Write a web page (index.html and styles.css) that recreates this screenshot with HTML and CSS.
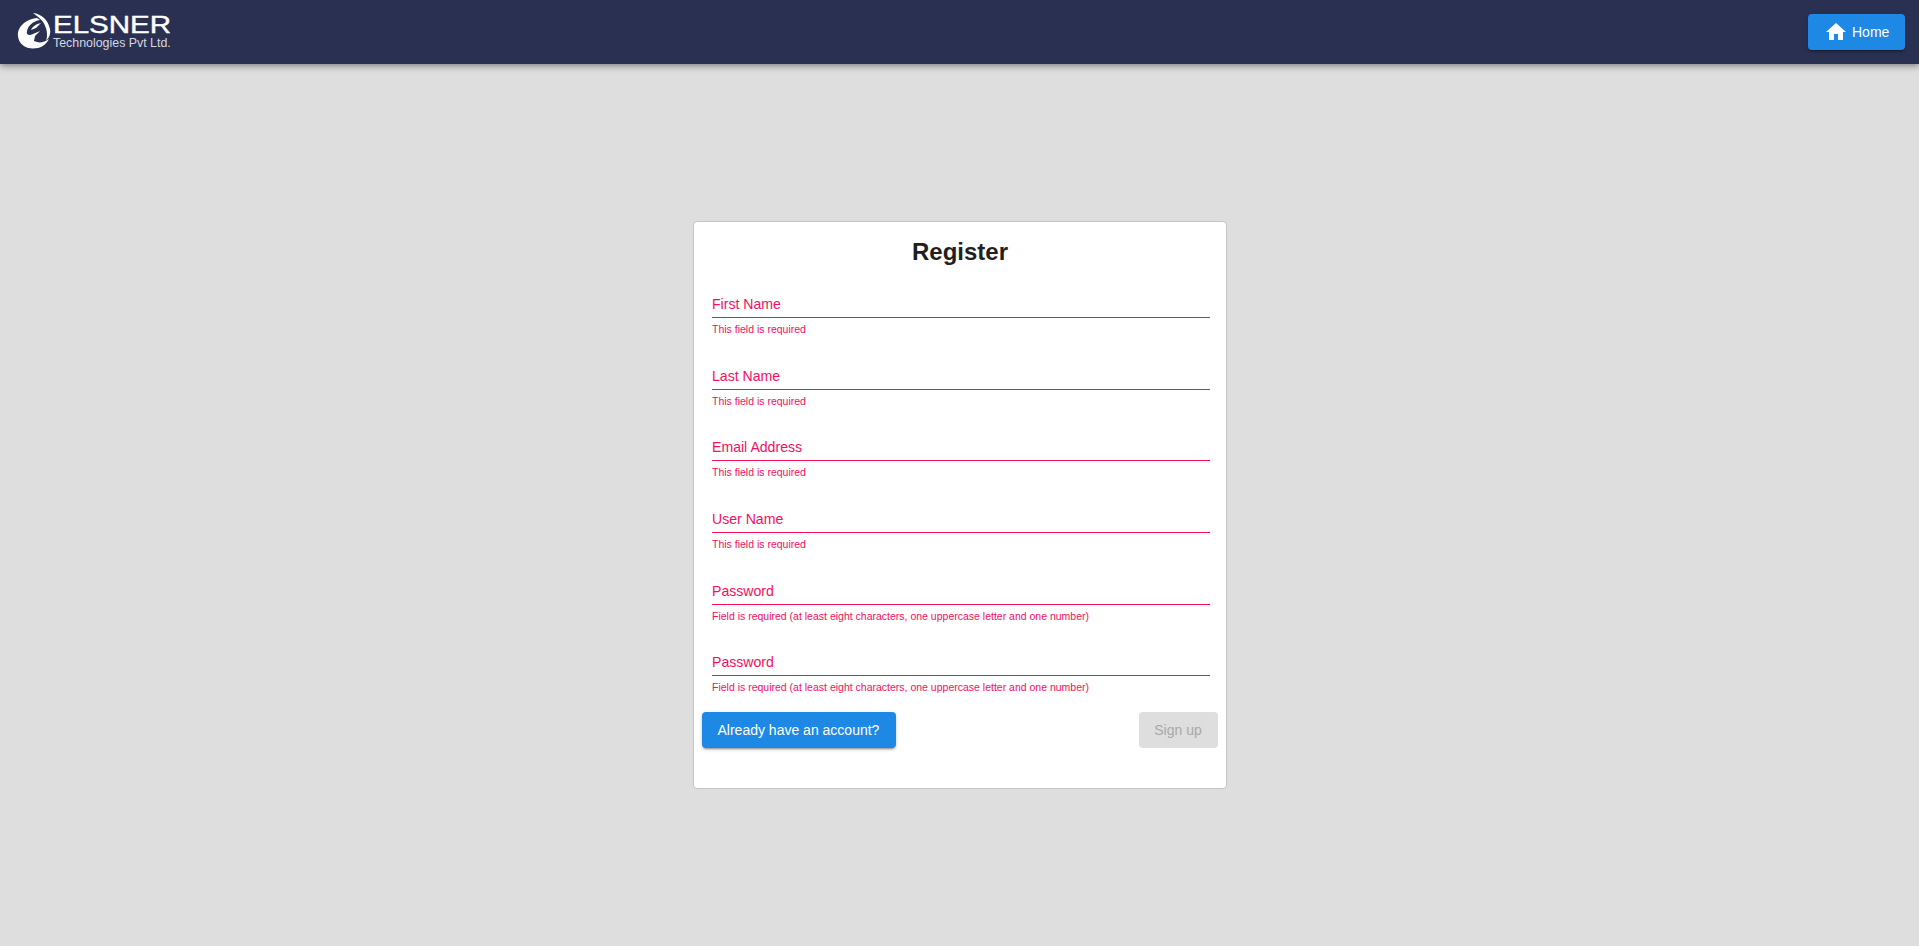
FILE: index.html
```html
<!DOCTYPE html>
<html lang="en">
<head>
    <meta charset="UTF-8">
    <meta name="viewport" content="width=device-width, initial-scale=1.0">
    <title>Register</title>
    <link rel="stylesheet" href="styles.css">
</head>
<body>
    <header class="topbar">
        <div class="logo">
            <svg class="logo-mark" viewBox="0 0 40 44" width="40" height="44">
                <path fill="#fff" d="M23 8C12 9 3 17 4 26c1 10 10 14 20 12 5-1 9-5 11-9-4 3-9 4-12 3l-3-1 1-5 5-5-7 3c-4 2-7 1-6-3 1-5 6-10 13-11z"/>
                <path fill="#fff" d="M19 3c9 1 15 7 17 16 1 5-1 9-4 12 2-6 1-13-3-19-2-3-6-6-10-9z"/>
                <path fill="#fff" d="M27 13c-5 1-9 4-10 7l5-2z"/>
            </svg>
            <div class="logo-text">
                <span class="logo-name">ELSNER</span>
                <span class="logo-sub">Technologies Pvt Ltd.</span>
            </div>
        </div>
        <button class="btn btn-primary btn-home">
            <svg class="home-icon" viewBox="0 0 24 24" width="24" height="24">
                <path fill="#fff" d="M10 20v-6h4v6h5v-8h3L12 3 2 12h3v8z"/>
            </svg>
            Home
        </button>
    </header>
    <main class="page">
        <form class="card">
            <h1 class="card-title">Register</h1>
            <div class="field">
                <label class="field-label">First Name</label>
                <p class="field-error">This field is required</p>
            </div>
            <div class="field">
                <label class="field-label">Last Name</label>
                <p class="field-error">This field is required</p>
            </div>
            <div class="field">
                <label class="field-label">Email Address</label>
                <p class="field-error">This field is required</p>
            </div>
            <div class="field">
                <label class="field-label">User Name</label>
                <p class="field-error">This field is required</p>
            </div>
            <div class="field">
                <label class="field-label">Password</label>
                <p class="field-error">Field is required (at least eight characters, one uppercase letter and one number)</p>
            </div>
            <div class="field">
                <label class="field-label">Password</label>
                <p class="field-error">Field is required (at least eight characters, one uppercase letter and one number)</p>
            </div>
            <div class="actions">
                <button type="button" class="btn btn-primary">Already have an account?</button>
                <button type="button" class="btn btn-disabled" disabled>Sign up</button>
            </div>
        </form>
    </main>
</body>
</html>
```

FILE: styles.css
```css
* {
    box-sizing: border-box;
}
html, body {
    height: 100%;
}
body {
    margin: 0;
    font-family: "Liberation Sans", Arial, sans-serif;
    background-color: #dedede;
    overflow: hidden;
}
.topbar {
    height: 64px;
    background: #2a3052;
    display: flex;
    justify-content: space-between;
    align-items: center;
    padding: 0 14px 0 14px;
    box-shadow: 0 2px 4px -1px rgba(0,0,0,.2), 0 4px 5px rgba(0,0,0,.14), 0 1px 10px rgba(0,0,0,.12);
}
.logo {
    display: flex;
    align-items: flex-start;
    color: #fff;
}
.logo-text {
    display: flex;
    flex-direction: column;
    margin-left: -1px;
    padding-top: 3px;
}
.logo-name {
    font-size: 24px;
    line-height: 23px;
    -webkit-text-stroke: .4px #fff;
    transform: scaleX(1.23);
    transform-origin: left center;
}
.logo-sub {
    font-size: 12.4px;
    line-height: 14px;
    color: #d5d7e0;
}
.btn {
    border: none;
    border-radius: 4px;
    font-family: inherit;
    font-size: 14px;
    height: 36px;
    padding: 0 16px;
    display: flex;
    align-items: center;
    white-space: nowrap;
}
.btn-primary {
    background: #1e88e5;
    color: #fff;
    box-shadow: 0 3px 1px -2px rgba(0,0,0,.2), 0 2px 2px rgba(0,0,0,.14), 0 1px 5px rgba(0,0,0,.12);
}
.btn-disabled {
    background: #dedede;
    color: #a8a8a8;
}
.btn-home {
    width: 97px;
    gap: 4px;
    padding: 0 0 0 16px;
}
.page {
    height: calc(100% - 64px);
    padding-top: 157px;
    display: flex;
    justify-content: center;
    align-items: flex-start;
}
.card {
    width: 534px;
    height: 568px;
    background: #fff;
    border: 1px solid #c4c4c4;
    border-radius: 4px;
    padding: 16px 8px 0;
}
.card-title {
    margin: 0 0 16.2px 1px;
    text-align: center;
    font-size: 24px;
    line-height: 28px;
    font-weight: bold;
    color: #1f1f1f;
}
.field {
    height: 71.6px;
    padding: 10px 8px 0 10.5px;
}
.field-label {
    display: block;
    height: 26px;
    font-size: 14.1px;
    line-height: 24px;
    color: #f50f5f;
    border-bottom: 1px solid #f50f5f;
}
.field-error {
    margin: 4px 0 0;
    font-size: 10.5px;
    line-height: 14px;
    color: #f50f5f;
}
.actions {
    display: flex;
    justify-content: space-between;
}
.actions .btn-primary {
    width: 194px;
}
.actions .btn-disabled {
    width: 79px;
    padding: 0;
    justify-content: center;
}
```
